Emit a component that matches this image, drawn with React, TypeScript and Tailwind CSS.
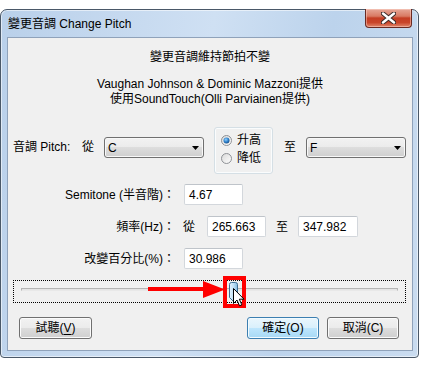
import React from "react";

function Combo({ value, className = "" }: { value: string; className?: string }) {
  return (
    <div
      className={`h-[21px] w-[100px] shrink-0 rounded-[3px] border border-[#707070] bg-[linear-gradient(#f2f2f2,#ebebeb_50%,#dddddd_50%,#cfcfcf)] shadow-[inset_0_0_0_1px_#f8f8f8] flex items-center justify-between pl-[3px] pr-[4px] ${className}`}
    >
      <span className="leading-[16px]">{value}</span>
      <svg width="7" height="4" viewBox="0 0 7 4">
        <path d="M0 0H7L3.5 4Z" fill="#000" />
      </svg>
    </div>
  );
}

function Field({ value, className = "" }: { value: string; className?: string }) {
  return (
    <div
      className={`h-[21px] shrink-0 rounded-[2px] border border-[#d3d7dc] border-t-[#bfc4ca] bg-white flex items-center pl-[4px] leading-[16px] ${className}`}
    >
      {value}
    </div>
  );
}

function Radio({ checked }: { checked: boolean }) {
  return (
    <svg width="11" height="11" viewBox="0 0 11 11" className="shrink-0">
      <defs>
        <linearGradient id={checked ? "rg1" : "rg0"} x1="0" y1="0" x2="1" y2="1">
          <stop offset="0" stopColor="#d8d8d8" />
          <stop offset="1" stopColor="#ffffff" />
        </linearGradient>
        <radialGradient id="dot" cx="0.4" cy="0.35" r="0.7">
          <stop offset="0" stopColor="#8fd0ff" />
          <stop offset="0.6" stopColor="#2a7cc6" />
          <stop offset="1" stopColor="#1a4a80" />
        </radialGradient>
      </defs>
      <circle cx="5.5" cy="5.5" r="5" fill={`url(#${checked ? "rg1" : "rg0"})`} stroke="#8e9196" strokeWidth="1" />
      {checked && <circle cx="5.5" cy="5.5" r="3" fill="url(#dot)" />}
    </svg>
  );
}

function Btn({
  children,
  className = "",
  def = false,
}: {
  children: React.ReactNode;
  className?: string;
  def?: boolean;
}) {
  return (
    <div
      className={`h-[22px] shrink-0 rounded-[3px] border flex items-center justify-center leading-[16px] ${
        def
          ? "border-[#3c7fb1] bg-[linear-gradient(#eaf6fd,#d9f0fc_50%,#bee6fd_50%,#a7d9f5)] shadow-[inset_0_0_0_1px_#f2fbff]"
          : "border-[#707070] bg-[linear-gradient(#f2f2f2,#ebebeb_50%,#dddddd_50%,#cfcfcf)] shadow-[inset_0_0_0_1px_#fbfbfb]"
      } ${className}`}
    >
      {children}
    </div>
  );
}

export default function App() {
  return (
    <div className="w-[431px] h-[365px] bg-white pt-[9px] font-['Liberation_Sans','Noto_Sans_CJK_TC',sans-serif] text-[12px] text-black overflow-hidden">
      <div className="w-[419px] h-[349px] rounded-t-[7px] rounded-b-[4px] border border-[#4a5868] bg-[linear-gradient(100deg,#b9d0ea,#cfe0f3_45%,#bcd3ec_70%,#cadcf0)] shadow-[inset_0_0_0_1px_rgba(255,255,255,0.55)] pl-[6px] pr-[5px] pb-[6px] flex flex-col">
        {/* title bar */}
        <div className="h-[27px] flex items-start justify-between shrink-0">
          <div className="mt-[6px] ml-[1px] leading-[16px] text-[12px] text-black">變更音調 Change Pitch</div>
          <div className="-mt-[1px] mr-[1px] w-[47px] h-[19px] rounded-b-[4px] border border-[#6a2a22] border-t-0 bg-[linear-gradient(#e6a797,#d97a63_40%,#c43e24_50%,#c9452a_75%,#e0876c)] shadow-[inset_0_0_0_1px_rgba(255,220,210,0.45)] flex items-center justify-center">
            <svg width="15" height="12" viewBox="0 0 15 12">
              <path d="M2 1.5L13 10.5M13 1.5L2 10.5" stroke="#3b2a28" strokeWidth="4.4" strokeLinecap="round" />
              <path d="M2 1.5L13 10.5M13 1.5L2 10.5" stroke="#ffffff" strokeWidth="2.4" strokeLinecap="round" />
            </svg>
          </div>
        </div>

        {/* client area */}
        <div className="relative flex-1 border border-[#8fa2ba] bg-[#f0f0f0] flex flex-col">
          <div className="mt-[11px] leading-[16px] text-center">變更音調維持節拍不變</div>
          <div className="mt-[12px] leading-[15px] text-center">
            Vaughan Johnson &amp; Dominic Mazzoni提供
            <br />
            使用SoundTouch(Olli Parviainen提供)
          </div>

          {/* pitch row */}
          <div className="mt-[20px] h-[47px] flex items-start">
            <span className="ml-[5px] mt-[12px] w-[69px] leading-[16px]">音調 Pitch:</span>
            <span className="mt-[12px] w-[22px] leading-[16px]">從</span>
            <Combo value="C" className="mt-[10px]" />
            <div className="ml-[10px] w-[59px] h-[47px] shrink-0 rounded-[3px] border border-[#d5dfe5] shadow-[inset_0_0_0_1px_#fafcfd] flex flex-col pl-[6px]">
              <div className="mt-[4px] h-[16px] flex items-center gap-[5px]">
                <Radio checked />
                <span className="leading-[16px]">升高</span>
              </div>
              <div className="mt-[2px] h-[16px] flex items-center gap-[5px]">
                <Radio checked={false} />
                <span className="leading-[16px]">降低</span>
              </div>
            </div>
            <span className="ml-[11px] mt-[12px] w-[12px] leading-[16px]">至</span>
            <Combo value="F" className="ml-[10px] mt-[10px]" />
          </div>

          {/* semitone */}
          <div className="mt-[10px] h-[21px] flex items-center">
            <span className="w-[167px] text-right leading-[16px]">Semitone (半音階)：</span>
            <Field value="4.67" className="ml-[9px] w-[59px]" />
          </div>

          {/* hz */}
          <div className="mt-[11px] h-[21px] flex items-center">
            <span className="w-[167px] text-right leading-[16px]">頻率(Hz)：</span>
            <span className="ml-[8px] w-[12px] leading-[16px]">從</span>
            <Field value="265.663" className="ml-[12px] w-[59px]" />
            <span className="ml-[10px] w-[12px] leading-[16px]">至</span>
            <Field value="347.982" className="ml-[10px] w-[60px]" />
          </div>

          {/* percent */}
          <div className="mt-[11px] h-[21px] flex items-center">
            <span className="w-[167px] text-right leading-[16px]">改變百分比(%)：</span>
            <Field value="30.986" className="ml-[9px] w-[59px]" />
          </div>

          {/* slider */}
          <div className="relative mt-[11px] ml-[5px] w-[393px] h-[23px] border border-dotted border-black shrink-0">
            <div className="mx-[7px] mt-[7px] h-[3px] border border-[#b4b4b4] border-b-[#e8e8e8] bg-[#e4e4e4]" />
            <svg className="absolute left-[214px] top-[1px]" width="11" height="21" viewBox="0 0 11 21">
              <defs>
                <linearGradient id="th" x1="0" y1="0" x2="1" y2="0">
                  <stop offset="0" stopColor="#e6f4fd" />
                  <stop offset="0.5" stopColor="#bfe1f7" />
                  <stop offset="1" stopColor="#7fb8de" />
                </linearGradient>
              </defs>
              <path d="M1.5 2.5Q1.5 0.5 3.5 0.5H7.5Q9.5 0.5 9.5 2.5V15.5L5.5 19.5L1.5 15.5Z" fill="url(#th)" stroke="#3c6f94" strokeWidth="1" />
            </svg>
          </div>

          {/* buttons */}
          <div className="mt-[14px] h-[22px] flex">
            <Btn className="ml-[11px] w-[73px]">
              試聽(<span className="underline underline-offset-2">V</span>)
            </Btn>
            <Btn def className="ml-[155px] w-[72px]">
              確定(O)
            </Btn>
            <Btn className="ml-[8px] w-[72px]">取消(C)</Btn>
          </div>

          {/* annotation overlays */}
          <div className="absolute left-[140px] top-[249px] w-[57px] h-[4px] bg-[#ff0000]" />
          <svg className="absolute left-[195px] top-[243px]" width="22" height="17" viewBox="0 0 22 17">
            <path d="M0 0L22 8.5L0 17Z" fill="#ff0000" />
          </svg>
          <div className="absolute left-[215px] top-[238px] w-[23px] h-[32px] border-[4px] border-[#ff0000]" />
          <svg className="absolute left-[225px] top-[250px]" width="12" height="19" viewBox="0 0 12 19">
            <path d="M0.5 0.5V15.5L4 12L6.5 17.8L8.8 16.8L6.3 11.2H11Z" fill="#fff" stroke="#000" strokeWidth="1" strokeLinejoin="round" />
          </svg>
        </div>
      </div>
    </div>
  );
}
